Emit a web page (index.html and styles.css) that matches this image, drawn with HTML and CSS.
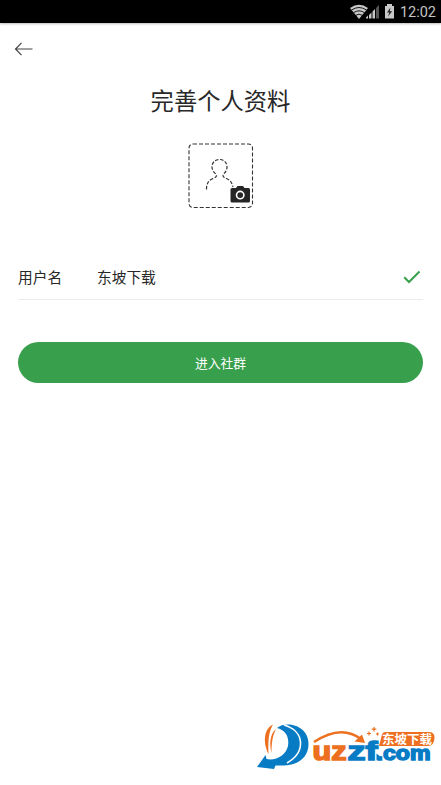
FILE: index.html
```html
<!DOCTYPE html>
<html lang="zh-CN">
<head>
<meta charset="utf-8">
<title>完善个人资料</title>
<link rel="stylesheet" href="styles.css">
</head>
<body>
<header class="status">
  <svg class="status-icons" width="46" height="23" viewBox="0 0 46 23">
    <path d="M0 8Q9 1.500 18 8L9 19z" fill="#c8c8c8"/>
    <path d="M1.500 10Q9 5 16.500 10M3.500 12.700Q9 9 14.500 12.700M5.800 15.300Q9 13 12.200 15.300" fill="none" stroke="#000" stroke-width=".9"/>
    <path d="M16 18.500h2v-3l-2 2zM19 18.500h2.500v-6L19 15zM22.500 18.500H25V9l-2.500 2.500z" fill="#c8c8c8"/>
    <path d="M26 18.500h3V5l-3 3z" fill="#555"/>
    <path d="M35 6h2V4h5v2h2v12.500h-9z" fill="#c8c8c8"/>
    <path d="M40.500 7.500L37 12.500h2.300L38 16.500l4.200-5.300h-2.400z" fill="#222"/>
  </svg>
  <span class="time">12:02</span>
</header>
<nav class="nav">
  <svg width="20" height="16" viewBox="0 0 20 16" fill="none" stroke="#444" stroke-width="1.200"><path d="M18.500 8H1.500M7.500 1.800L1.500 8l6 6.200"/></svg>
</nav>
<main class="page">
  <h1 class="title">完善个人资料</h1>
  <svg class="avatar" width="66" height="66" viewBox="0 0 66 66">
    <rect x="1" y="1" width="63.500" height="63.500" rx="4" fill="none" stroke="#333" stroke-width="1.100" stroke-dasharray="4 2"/>
    <path d="M18.500 46.500c0-6 2-9 6-10.800 3-1.200 4.500-2 4-4.200-3-2-4.500-5-4.500-7.500 0-4.500 3-7.500 7.500-7.500s7.500 3 7.500 7.500c0 3-1.500 5.500-4 7.500-.5 2.500 1 3 4 4.200 3 1.400 5 4 6 8.300" fill="none" stroke="#333" stroke-width="1.200" stroke-dasharray="3.500 1.600"/>
    <path d="M44 45h4l1.500-2h5.500l1.500 2h4a1.500 1.500 0 0 1 1.500 1.500v11.500a1.500 1.500 0 0 1-1.500 1.500H44a1.500 1.500 0 0 1-1.500-1.500V46.500A1.500 1.500 0 0 1 44 45z" fill="#252525"/>
    <circle cx="52.200" cy="52.100" r="3.700" fill="none" stroke="#fff" stroke-width="1.600"/>
  </svg>
  <div class="field">
    <label class="label">用户名</label>
    <span class="value">东坡下载</span>
    <svg class="check" width="18" height="14" viewBox="0 0 18 14" fill="none" stroke="#38a04d" stroke-width="2"><path d="M1.200 7.200L6 12 16.500 1.500"/></svg>
  </div>
  <button class="submit">进入社群</button>
</main>
<svg class="watermark" width="191" height="70" viewBox="250 715 191 70">
  <path d="M273 724.500C263.500 729 263 743 268.500 754 268 741 268.500 732 273 724.500zM276 729C269.500 734 269.500 745 271.500 753 271.500 743 272.500 736 276 729z" fill="#ed7020"/>
  <path d="M277 728C286 720.500 308.500 725 308.500 744 308.500 758 297 766 282 765.500L275.500 765.500 274 769 257 767 265.500 755 266.500 759C276 761 286 755 288 746 289.500 736 285 730 277 728z" fill="#087bc5"/>
  <path d="M284 725C305 731 306 752 287 763" fill="none" stroke="#fff" stroke-width="1.600"/>
  <path d="M314 742Q341 724 361 739" fill="none" stroke="#ed7020" stroke-width="2.400"/>
  <path d="M365 743L354.500 741.500 362 734.500z" fill="#ed7020"/>
  <g class="brand">
    <text x="312.500" y="759.500" textLength="34" lengthAdjust="spacingAndGlyphs" fill="#ed7020" stroke="#ed7020">uz</text>
    <text x="347.500" y="759.500" textLength="30" lengthAdjust="spacingAndGlyphs" fill="#087bc5" stroke="#087bc5">zf</text>
    <text class="domain" x="376.500" y="759.500" textLength="54" lengthAdjust="spacingAndGlyphs" fill="#087bc5" stroke="#087bc5">.com</text>
  </g>
  <path d="M376.500 753.500l5 4-5 3z" fill="#087bc5"/>
  <path d="M385 732h44q5.500 0 5.500 5.500 0 8.500-7 8.500H379l3-11.500q.7-2.500 3-2.500z" fill="#ed7020"/>
  <text class="badge" x="382" y="744.300" textLength="50" lengthAdjust="spacingAndGlyphs">东坡下载</text>
  <path d="M374 727v4.500M371.700 729.200h4.600M369 731.500v4M367 733.500h4M377.500 732.500v3M376 734h3" stroke="#ed7020" stroke-width="1.200"/>
</svg>
</body>
</html>
```
FILE: styles.css
```css
* { box-sizing: border-box; }
body {
  margin: 0;
  min-height: 785px;
  background: #fff;
  color: #282828;
  font-family: "Noto Sans CJK SC", sans-serif;
}
.status {
  display: flex;
  justify-content: flex-end;
  align-items: center;
  height: 23px;
  padding-right: 5px;
  background: #000;
  box-shadow: 0 1px 2px #bbb;
}
.status-icons { margin-right: 4px; }
.time { font: 14.5px/23px Roboto, sans-serif; color: #c4c4c4; padding-top: 2px; }
.nav { height: 52px; padding: 18px 14px 0; }
.nav svg { display: block; }
.page { padding: 0 18px; }
.title {
  margin: 7px 0 0;
  text-align: center;
  font-size: 23.3px;
  line-height: 36px;
  font-weight: 400;
}
.avatar { display: block; margin: 25px auto 0; }
.field {
  display: flex;
  align-items: center;
  height: 46px;
  margin-top: 45px;
  border-bottom: 1px solid #ebebeb;
  font-size: 14.7px;
}
.label { width: 79px; }
.check { margin-left: auto; margin-right: 2px; }
.submit {
  display: block;
  width: 100%;
  height: 41px;
  margin-top: 42px;
  padding: 0;
  border: 0;
  border-radius: 21px;
  background: #38a04d;
  color: #fff;
  font: 12.8px "Noto Sans CJK SC", sans-serif;
}
.watermark { position: absolute; left: 250px; top: 715px; }
.brand { font: bold 26px "Liberation Sans", sans-serif; stroke-width: 1.5px; }
.domain { font-size: 20px; }
.badge { font: bold 12px "Noto Sans CJK SC", sans-serif; fill: #fff; }
```
